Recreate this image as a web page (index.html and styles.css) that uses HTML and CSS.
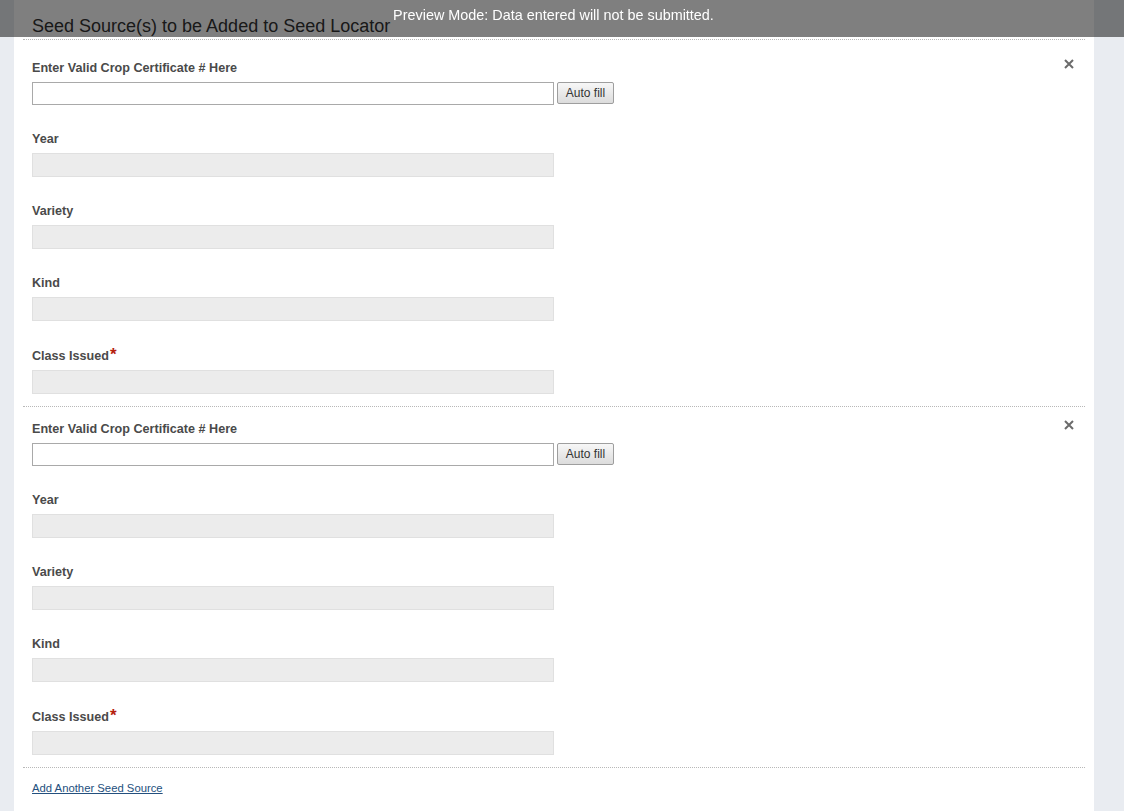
FILE: index.html
```html
<!DOCTYPE html>
<html lang="en">
<head>
<meta charset="utf-8">
<title>Seed Source(s) to be Added to Seed Locator</title>
<link rel="stylesheet" href="styles.css">
</head>
<body>
<div class="preview-bar">Preview Mode: Data entered will not be submitted.</div>
<div class="page">
  <main class="panel">
    <h2 class="title">Seed Source(s) to be Added to Seed Locator</h2>

    <section class="source source-first">
      <button class="remove" type="button" aria-label="Remove">
        <svg viewBox="0 0 10 10" width="10" height="10"><path d="M1 1 L9 9 M9 1 L1 9" stroke="#6b6b6b" stroke-width="2" fill="none"/></svg>
      </button>
      <div class="field">
        <label class="label">Enter Valid Crop Certificate # Here</label>
        <div class="cert-row"><input class="cert-input" type="text"><button class="autofill" type="button">Auto fill</button></div>
      </div>
      <div class="field"><label class="label">Year</label><div class="readonly"></div></div>
      <div class="field"><label class="label">Variety</label><div class="readonly"></div></div>
      <div class="field"><label class="label">Kind</label><div class="readonly"></div></div>
      <div class="field field-required"><label class="label">Class Issued<span class="req">*</span></label><div class="readonly"></div></div>
    </section>

    <section class="source">
      <button class="remove" type="button" aria-label="Remove">
        <svg viewBox="0 0 10 10" width="10" height="10"><path d="M1 1 L9 9 M9 1 L1 9" stroke="#6b6b6b" stroke-width="2" fill="none"/></svg>
      </button>
      <div class="field">
        <label class="label">Enter Valid Crop Certificate # Here</label>
        <div class="cert-row"><input class="cert-input" type="text"><button class="autofill" type="button">Auto fill</button></div>
      </div>
      <div class="field"><label class="label">Year</label><div class="readonly"></div></div>
      <div class="field"><label class="label">Variety</label><div class="readonly"></div></div>
      <div class="field"><label class="label">Kind</label><div class="readonly"></div></div>
      <div class="field field-required"><label class="label">Class Issued<span class="req">*</span></label><div class="readonly"></div></div>
    </section>

    <div class="add-row"><a class="add-link" href="#">Add Another Seed Source</a></div>
  </main>
</div>
</body>
</html>
```

FILE: styles.css
```css
html, body {
  margin: 0;
  padding: 0;
}
body {
  background: #e9ecf1;
  font-family: "Liberation Sans", Arial, sans-serif;
  color: #444;
}
.preview-bar {
  position: fixed;
  top: 0;
  left: 0;
  right: 0;
  height: 37px;
  box-sizing: border-box;
  padding: 7px 17px 0 0;
  background: rgba(0, 0, 0, 0.5);
  color: #fff;
  font-size: 14.4px;
  line-height: 16px;
  text-align: center;
  z-index: 10;
}
.page {
  padding-left: 14px;
  width: 1080px;
}
.panel {
  background: #fff;
  min-height: 811px;
  padding: 15px 9px 20px;
  box-sizing: border-box;
}
.title {
  margin: 0 0 2px;
  padding-left: 9px;
  font-size: 18px;
  line-height: 22px;
  font-weight: normal;
  color: #333;
}
.source {
  --pt: 13px;
  position: relative;
  border-top: 1px dotted #b8b8b8;
  padding: var(--pt) 9px 12px;
  display: flex;
  flex-direction: column;
  gap: 25px;
}
.source-first {
  --pt: 19px;
  padding-bottom: 12px;
}
.remove {
  position: absolute;
  top: var(--pt);
  right: 11px;
  width: 10px;
  height: 10px;
  padding: 0;
  border: 0;
  background: none;
  display: flex;
}
.field {
  display: flex;
  flex-direction: column;
  gap: 5px;
}
.field-required {
  margin-top: 1px;
}
.label {
  font-size: 12.6px;
  line-height: 18px;
  font-weight: bold;
  color: #4a4a4a;
}
.req {
  color: #b5200d;
  font-size: 17px;
  line-height: 0;
  margin-left: 1px;
}
.cert-row {
  display: flex;
  align-items: flex-start;
  gap: 3px;
}
.cert-input {
  width: 522px;
  height: 23px;
  box-sizing: border-box;
  margin: 0;
  border: 1px solid #a9a9a9;
  background: #fff;
  padding: 0 4px;
}
.autofill {
  width: 57px;
  height: 22px;
  box-sizing: border-box;
  margin: 0;
  padding: 0;
  border: 1px solid #9e9e9e;
  border-radius: 2px;
  background: linear-gradient(#f7f7f7, #dcdcdc);
  font-family: "Liberation Sans", Arial, sans-serif;
  font-size: 12px;
  color: #333;
}
.readonly {
  width: 522px;
  height: 24px;
  box-sizing: border-box;
  border: 1px solid #e0e0e0;
  background: #ececec;
}
.add-row {
  border-top: 1px dotted #b8b8b8;
  padding: 12px 9px 0;
  line-height: 13px;
}
.add-link {
  font-size: 11.3px;
  color: #24507e;
  text-decoration: underline;
}
```
